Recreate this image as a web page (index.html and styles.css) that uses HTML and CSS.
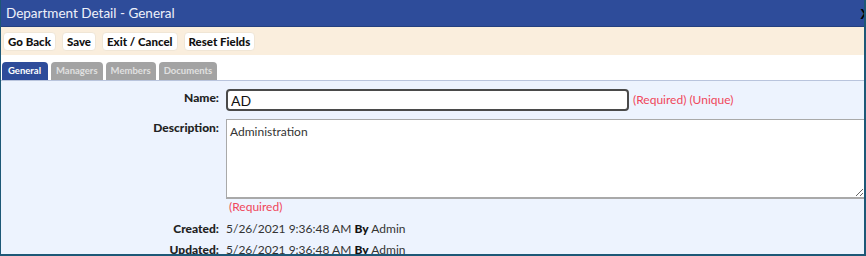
FILE: index.html
```html
<!DOCTYPE html>
<html>
    <head lang="en">
        <meta charset="UTF-8">
        <title>Department Detail</title>
        <link rel="stylesheet" href="styles.css">
    </head>
    <body>
        <div id="window">
            <div class="titlebar">
                <span class="title">Department Detail - General</span>
                <span class="close">X</span>
            </div>
            <div class="toolbar">
                <button class="btn">Go Back</button>
                <button class="btn">Save</button>
                <button class="btn">Exit / Cancel</button>
                <button class="btn">Reset Fields</button>
            </div>
            <ul class="tabs">
                <li class="selected">General</li>
                <li>Managers</li>
                <li>Members</li>
                <li>Documents</li>
            </ul>
            <div class="content">
                <div class="row">
                    <label class="lbl">Name:</label>
                    <div class="field">
                        <input class="txt" type="text" value="AD">
                        <span class="req">(Required) (Unique)</span>
                    </div>
                </div>
                <div class="row desc">
                    <label class="lbl">Description:</label>
                    <div class="field col">
                        <textarea class="area">Administration</textarea>
                        <span class="req">(Required)</span>
                    </div>
                </div>
                <div class="row info">
                    <span class="lbl">Created:</span>
                    <span class="val">5/26/2021 9:36:48 AM <b>By</b> Admin</span>
                </div>
                <div class="row info">
                    <span class="lbl">Updated:</span>
                    <span class="val">5/26/2021 9:36:48 AM <b>By</b> Admin</span>
                </div>
            </div>
        </div>
    </body>
</html>
```

FILE: styles.css
```css
*{
    margin: 0;
    padding: 0;
    box-sizing: border-box;
}
body{
    width: 866px;
    height: 256px;
    overflow: hidden;
    font-family: Lato, "Open Sans", sans-serif;
    background: #1d5877;
}
ul{
    list-style: none;
}
#window{
    margin: 0 2px 2px 1px;
    height: 254px;
    overflow: hidden;
    background: #edf3fe;
}
.titlebar{
    height: 27px;
    background: #2e4c9a;
    display: flex;
    align-items: center;
    justify-content: space-between;
    padding-left: 5px;
    border-bottom: 1px solid #24407f;
}
.title{
    color: #eef1fa;
    font-size: 13.5px;
}
.close{
    color: #000;
    font-weight: bold;
    font-size: 14px;
    margin-right: -6px;
}
.toolbar{
    height: 28px;
    background: #faeedd;
    display: flex;
    align-items: center;
    gap: 6px;
    padding-left: 2px;
}
.btn{
    font-family: inherit;
    font-weight: 900;
    font-size: 11.5px;
    color: #111;
    background: #fff;
    border: 1px solid #f0e6d6;
    border-radius: 4px;
    height: 19px;
    padding: 0 4px;
}
.tabs{
    height: 26px;
    background: #fff;
    display: flex;
    align-items: flex-end;
    gap: 3px;
    padding-left: 1px;
    border-bottom: 1px solid #b9c4dd;
}
.tabs li{
    height: 18px;
    line-height: 18px;
    padding: 0 5px;
    font-size: 9.5px;
    font-weight: bold;
    color: #e0e0e0;
    background: #a3a3a3;
    border-radius: 4px 4px 0 0;
}
.tabs li.selected{
    background: #2e4c9a;
    color: #fff;
    padding: 0 7px 0 6px;
}
.content{
    padding-top: 8px;
}
.row{
    display: flex;
    margin-bottom: 8px;
}
.row.desc{
    margin-bottom: 5px;
}
.lbl{
    width: 225px;
    text-align: right;
    font-size: 12px;
    font-weight: 900;
    color: #222;
    padding-right: 7px;
    line-height: 17px;
}
.field{
    display: flex;
    align-items: center;
    gap: 4px;
}
.field.col{
    flex-direction: column;
    align-items: flex-start;
    gap: 0;
    flex: 1;
}
.txt{
    width: 403px;
    height: 22px;
    border: 2px solid #4a4a4a;
    border-radius: 4px;
    padding: 0 3px;
    font-family: inherit;
    font-size: 14px;
    color: #111;
    outline: none;
}
.req{
    color: #f0475b;
    font-size: 12px;
    line-height: 16px;
}
.area{
    width: 100%;
    height: 80px;
    border: 1px solid #a9a9a9;
    border-width: 1px 0 2px 1px;
    padding: 4px 3px;
    font-family: inherit;
    font-size: 12px;
    color: #333;
    resize: both;
}
.field.col .req{
    padding-left: 3px;
}
.row.info{
    margin-bottom: 4px;
}
.val{
    font-size: 12px;
    line-height: 17px;
    color: #333;
}
.val b{
    color: #111;
    font-weight: 900;
}
```
